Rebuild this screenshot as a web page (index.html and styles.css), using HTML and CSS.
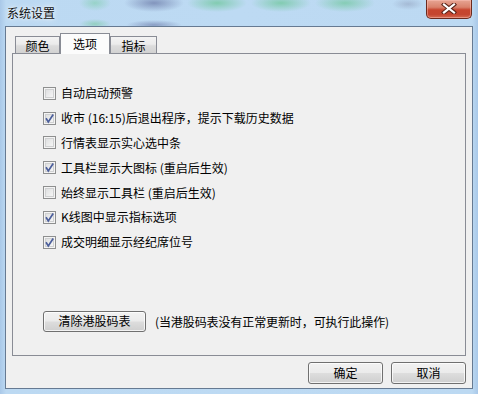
FILE: index.html
```html
<!DOCTYPE html>
<html lang="zh-CN">
<head>
<meta charset="utf-8">
<title>系统设置</title>
<link rel="stylesheet" href="styles.css">
</head>
<body>
<div class="window">
  <div class="titlebar">
    <span class="title">系统设置</span>
    <button class="close" aria-label="关闭">
      <svg width="20" height="11" viewBox="0 0 20 11"><path d="M5 1.5 L15 9.5 M15 1.5 L5 9.5" stroke="#5b2318" stroke-width="4.2" stroke-linecap="square"/><path d="M5 1.5 L15 9.5 M15 1.5 L5 9.5" stroke="#ffffff" stroke-width="2.2" stroke-linecap="square"/></svg>
    </button>
  </div>
  <div class="client">
    <div class="tabs">
      <div class="tab">颜色</div>
      <div class="tab active">选项</div>
      <div class="tab">指标</div>
    </div>
    <div class="panel">
      <div class="options">
        <label class="opt"><span class="box"></span><span>自动启动预警</span></label>
        <label class="opt"><span class="box checked"><svg width="11" height="11" viewBox="0 0 11 11"><path d="M2 5.2 L4.3 9 L9.2 1.5" fill="none" stroke="#4b5e9b" stroke-width="1.7"/></svg></span><span>收市 (16:15)后退出程序，提示下载历史数据</span></label>
        <label class="opt"><span class="box"></span><span>行情表显示实心选中条</span></label>
        <label class="opt"><span class="box checked"><svg width="11" height="11" viewBox="0 0 11 11"><path d="M2 5.2 L4.3 9 L9.2 1.5" fill="none" stroke="#4b5e9b" stroke-width="1.7"/></svg></span><span>工具栏显示大图标 (重启后生效)</span></label>
        <label class="opt"><span class="box"></span><span>始终显示工具栏 (重启后生效)</span></label>
        <label class="opt"><span class="box checked"><svg width="11" height="11" viewBox="0 0 11 11"><path d="M2 5.2 L4.3 9 L9.2 1.5" fill="none" stroke="#4b5e9b" stroke-width="1.7"/></svg></span><span>K线图中显示指标选项</span></label>
        <label class="opt"><span class="box checked"><svg width="11" height="11" viewBox="0 0 11 11"><path d="M2 5.2 L4.3 9 L9.2 1.5" fill="none" stroke="#4b5e9b" stroke-width="1.7"/></svg></span><span>成交明细显示经纪席位号</span></label>
      </div>
      <div class="clear-row">
        <button class="btn btn-clear">清除港股码表</button>
        <span class="note">(当港股码表没有正常更新时，可执行此操作)</span>
      </div>
    </div>
    <div class="footer">
      <button class="btn btn-dlg">确定</button>
      <button class="btn btn-dlg">取消</button>
    </div>
  </div>
</div>
</body>
</html>
```

FILE: styles.css
```css
* { box-sizing: border-box; }
html, body { margin: 0; padding: 0; }
body {
  width: 478px;
  height: 394px;
  overflow: hidden;
  font-family: "Noto Sans CJK SC", "Noto Sans", sans-serif;
  font-size: 12px;
  color: #000;
}
.window {
  width: 478px;
  height: 394px;
  padding: 0 5px 5px 5px;
  display: flex;
  flex-direction: column;
  background:
    radial-gradient(ellipse 16px 5px at 95px 24px, rgba(120,200,160,0.6), rgba(120,200,160,0) 100%),
    radial-gradient(ellipse 28px 5px at 154px 25px, rgba(110,125,170,0.65), rgba(110,125,170,0) 100%),
    radial-gradient(ellipse 16px 8px at 95px 3px, rgba(120,205,165,0.55), rgba(120,205,165,0) 100%),
    radial-gradient(ellipse 30px 9px at 154px 3px, rgba(110,125,170,0.75), rgba(110,125,170,0) 100%),
    radial-gradient(ellipse 30px 9px at 217px 3px, rgba(115,200,160,0.8), rgba(115,200,160,0) 100%),
    radial-gradient(ellipse 30px 9px at 281px 3px, rgba(115,200,160,0.8), rgba(115,200,160,0) 100%),
    radial-gradient(ellipse 30px 9px at 345px 3px, rgba(115,200,160,0.75), rgba(115,200,160,0) 100%),
    radial-gradient(ellipse 16px 6px at 408px 4px, rgba(130,140,170,0.4), rgba(130,140,170,0) 100%),
    linear-gradient(to right, #a9c8e8 0, #bcd9f2 6px, #bddaf3 50%, #bcd9f2 calc(100% - 6px), #a9c8e8 100%);
}
.titlebar {
  height: 26px;
  flex: none;
  display: flex;
  align-items: flex-start;
}
.title {
  margin-left: 2px;
  margin-top: 5px;
  font-size: 12px;
  line-height: 16px;
  color: #111;
  text-shadow: 0 0 6px rgba(255,255,255,0.9), 0 0 3px rgba(255,255,255,0.7);
}
.close {
  margin-left: auto;
  margin-right: 1px;
  width: 46px;
  height: 19px;
  padding: 0;
  border: 1px solid #6b2a1e;
  border-top: none;
  border-radius: 0 0 5px 5px;
  background: linear-gradient(#e7a593 0, #d9826c 40%, #c7452e 55%, #c4452f 80%, #d56c52 100%);
  box-shadow: inset 0 0 0 1px rgba(255,200,190,0.45);
  display: flex;
  align-items: center;
  justify-content: center;
}
.close svg { display: block; margin-top: -1px; }
.client {
  flex: 1;
  background: #f0f0f0;
  border: 1px solid #667a92;
  padding: 6px 6px 4px 6px;
  display: flex;
  flex-direction: column;
}
.tabs {
  display: flex;
  align-items: flex-end;
  height: 20px;
  padding-left: 3px;
  flex: none;
}
.tab {
  height: 17px;
  border: 1px solid #898c95;
  border-bottom: none;
  background: linear-gradient(#f3f3f3, #ebebeb 45%, #dcdcdc 55%, #d2d2d2);
  display: flex;
  align-items: center;
  justify-content: center;
  line-height: 14px;
  padding-top: 1px;
}
.tab:nth-child(1) { width: 45px; }
.tab:nth-child(3) { width: 47px; }
.tab.active {
  width: 50px;
  height: 21px;
  margin-bottom: -1px;
  background: #fcfcfc;
  position: relative;
  z-index: 1;
  padding-top: 0;
}
.panel {
  height: 303px;
  flex: none;
  border: 1px solid #898c95;
  background: #f0f0f0;
  padding: 27px 0 0 30px;
  display: flex;
  flex-direction: column;
}
.options {
  display: flex;
  flex-direction: column;
}
.opt {
  height: 24.8px;
  display: flex;
  align-items: center;
  gap: 5px;
  line-height: 16px;
  white-space: nowrap;
}
.box {
  width: 13px;
  height: 13px;
  flex: none;
  border: 1px solid #8e8f8f;
  background: linear-gradient(135deg, #d9dadb, #fbfbfb);
  box-shadow: inset 0 0 0 1px #f4f4f4, inset 0 0 0 2px #cfd0d1;
  display: flex;
  align-items: center;
  justify-content: center;
}
.box svg { display: block; }
.clear-row {
  margin-top: 56px;
  display: flex;
  align-items: center;
  gap: 9px;
}
.btn {
  font-family: inherit;
  font-size: 12px;
  color: #000;
  border: 1px solid #707070;
  border-radius: 3px;
  background: linear-gradient(#f2f2f2, #ebebeb 48%, #dddddd 52%, #cfcfcf);
  box-shadow: inset 0 0 0 1px rgba(255,255,255,0.75);
  padding: 0;
  line-height: 14px;
}
.btn-clear {
  width: 103px;
  height: 21px;
}
.note { white-space: nowrap; letter-spacing: -0.1px; }
.footer {
  margin-top: 6px;
  display: flex;
  justify-content: flex-end;
  gap: 8px;
  padding-right: 0;
}
.btn-dlg {
  width: 75px;
  height: 22px;
}
```
